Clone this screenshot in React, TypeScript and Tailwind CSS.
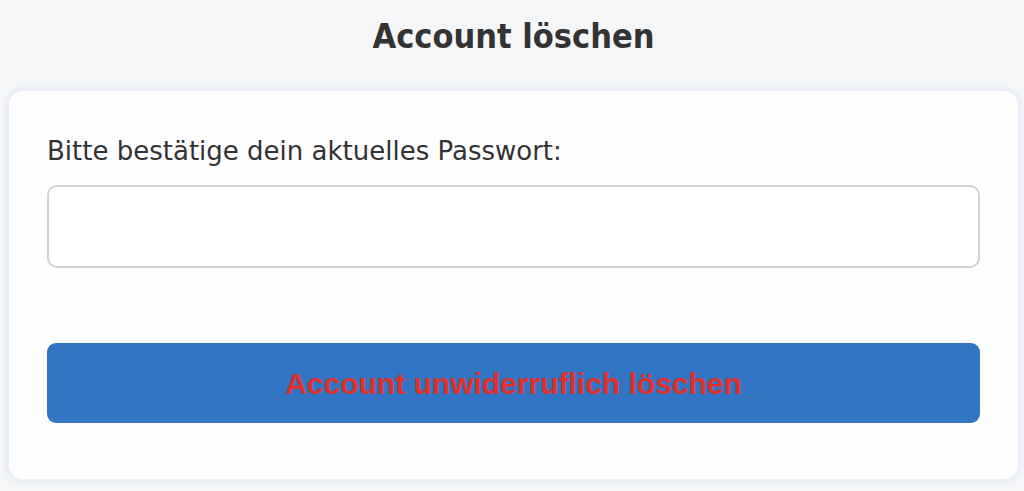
export default function App() {
  return (
    <div className="min-h-screen bg-[#f5f6f8] pl-[9px] pr-[6px] pt-[14px]">
      <h1 className="text-center text-[34px] leading-[44px] font-bold text-[#333] font-['DejaVu_Sans_Condensed','DejaVu_Sans',sans-serif] [font-stretch:condensed]">
        Account löschen
      </h1>
      <div className="mt-[33px] h-[388px] rounded-[14px] bg-[#fefefe] px-[38px] pt-[43px] shadow-[0_0_3px_5px_#ebf0f6]">
        <label className="block text-[26px] leading-[34px] text-[#333] font-['DejaVu_Sans',sans-serif]">
          Bitte bestätige dein aktuelles Passwort:
        </label>
        <input
          type="password"
          className="mt-[17px] block h-[83px] w-full rounded-[10px] border-2 border-[#d2d2d2] bg-white outline-none"
        />
        <button className="mt-[75px] flex h-[80px] w-full items-center justify-center rounded-[9px] bg-[#3175c4] text-[30px] font-bold text-[#e0302a] font-['Liberation_Sans',Arial,sans-serif]">
          Account unwiderruflich löschen
        </button>
      </div>
    </div>
  );
}
